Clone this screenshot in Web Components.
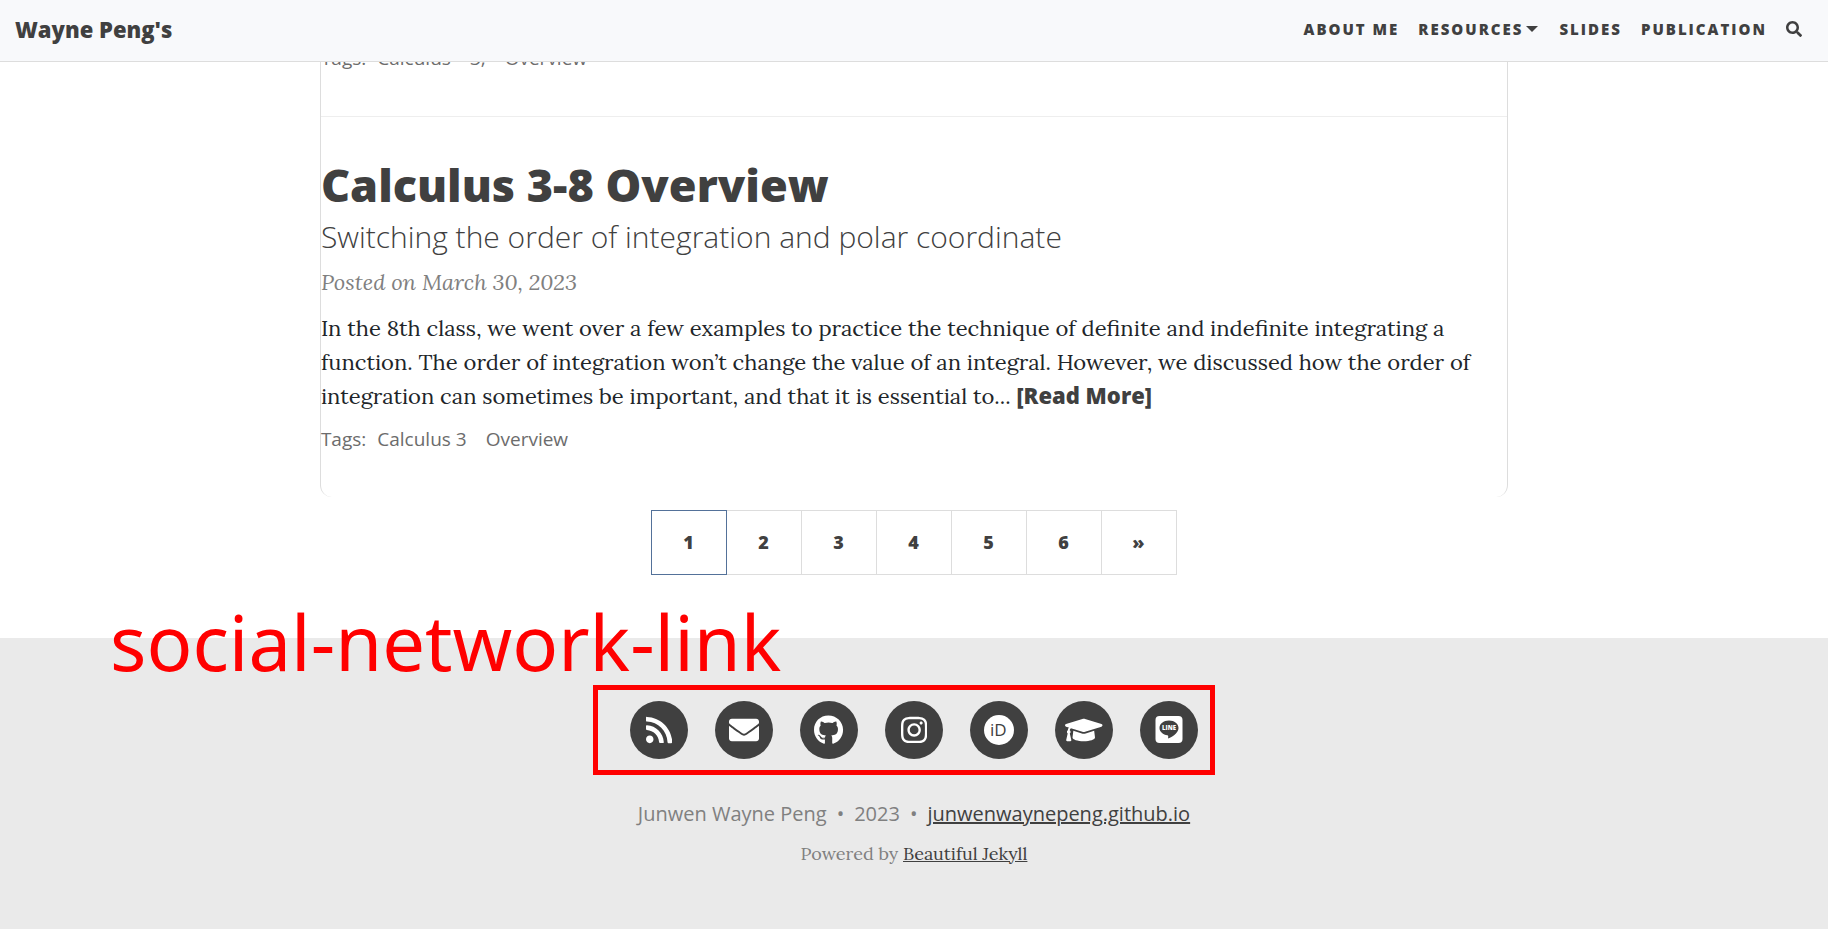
<!DOCTYPE html>
<html lang="en">
<head>
<meta charset="utf-8">
<title>Wayne Peng's</title>
<style>
html,body{margin:0}
body{--ink:#404040;--muted:#808080;--line:#ddd;--head:"Open Sans","Noto Sans",sans-serif;--text:"Lora","Liberation Serif",serif;
display:flex;flex-direction:column;min-height:100vh;background:#fff;color:#212529;font-family:var(--text)}
site-footer{flex:1}
</style>
</head>
<body>
<site-nav></site-nav>
<post-list>
  <post-tags prior><a href="#calculus">Calculus</a><a href="#3">3,</a><a href="#overview">Overview</a></post-tags>
  <post-preview>
    <span slot="title">Calculus 3-8 Overview</span>
    <span slot="subtitle">Switching the order of integration and polar coordinate</span>
    <span slot="date">Posted on March 30, 2023</span>
    <span slot="excerpt">In the 8th class, we went over a few examples to practice the technique of definite and indefinite integrating a function. The order of integration won’t change the value of an integral. However, we discussed how the order of integration can sometimes be important, and that it is essential to... <read-more>[Read More]</read-more></span>
    <post-tags slot="tags"><a href="#calculus-3">Calculus 3</a><a href="#overview">Overview</a></post-tags>
  </post-preview>
</post-list>
<page-pager></page-pager>
<site-footer></site-footer>
<script>
const define=(name,html)=>customElements.define(name,class extends HTMLElement{
  constructor(){super();this.attachShadow({mode:"open"}).innerHTML=html}
});

define("site-nav",`<style>
:host{display:block;position:fixed;top:0;left:0;right:0;z-index:2;background:#f8f9fb;border-bottom:1px solid var(--line);font-family:var(--head);color:var(--ink);font-weight:800}
nav{display:flex;align-items:center;justify-content:space-between;height:61px;padding:0 26px 4px 15px;box-sizing:border-box}
a{color:inherit;text-decoration:none}
.brand{font-size:22px;line-height:32px}
ul{display:flex;gap:19px;margin:0;padding:0;list-style:none;font-size:15px;line-height:24px;letter-spacing:2px;text-transform:uppercase}
li{display:flex;align-items:center}
button{font:inherit;color:inherit;letter-spacing:inherit;text-transform:inherit;background:none;border:0;padding:0;display:flex;align-items:center;gap:3px}
i{border:6px solid transparent;border-top-color:currentColor;border-bottom:0;margin-right:2px}
svg{width:16px;height:16px;fill:currentColor;display:block}
</style>
<nav><a class="brand" href="#home">Wayne Peng's</a>
<ul><li><a href="#about">About Me</a></li><li><button type="button">Resources<i></i></button></li><li><a href="#slides">Slides</a></li><li><a href="#publication">Publication</a></li>
<li><button type="button" aria-label="Search"><svg viewBox="0 0 512 512"><path d="M505 442.7L405.3 343c-4.5-4.5-10.6-7-17-7H372c27.6-35.3 44-79.7 44-128C416 93.1 322.9 0 208 0S0 93.1 0 208s93.1 208 208 208c48.3 0 92.7-16.4 128-44v16.3c0 6.4 2.5 12.5 7 17l99.7 99.7c9.4 9.4 24.6 9.4 33.9 0l28.3-28.3c9.4-9.4 9.4-24.6.1-34zM208 336c-70.7 0-128-57.2-128-128 0-70.7 57.2-128 128-128 70.7 0 128 57.2 128 128 0 70.7-57.2 128-128 128z"/></svg></button></li></ul></nav>`);

define("post-list",`<style>
:host{display:block;width:65%;box-sizing:border-box;margin:0 auto;padding-top:44px;border:solid var(--line);border-width:0 1px;border-radius:0 0 12px 12px}
</style><slot></slot>`);

define("post-tags",`<style>
:host{display:flex;font-family:var(--head);font-size:19px;line-height:28px;color:#6c6c6c}
:host([prior]){margin-bottom:44px}
::slotted(a){color:inherit;text-decoration:none;margin-left:11px;margin-right:8px}
</style><span>Tags:</span><slot></slot>`);

define("read-more",`<style>
:host{display:inline}
a{font-family:var(--head);font-weight:800;line-height:24px;color:var(--ink);text-decoration:none}
</style><a href="#post"><slot></slot></a>`);

define("post-preview",`<style>
:host{display:block;border-top:1px solid #eee;padding:43px 0 44px}
h2,h3,p{margin:0}
h2,h3{font-family:var(--head);color:var(--ink)}
h2{font-size:45px;line-height:50px;font-weight:800}
h3{font-size:30px;line-height:34px;font-weight:300;margin-top:10px}
a{color:inherit;text-decoration:none}
.date{font-style:italic;font-size:22px;line-height:34px;color:var(--muted);margin:11px 0 12px}
.excerpt{font-size:22px;line-height:34px;margin-bottom:12px}
</style>
<article><a href="#post"><h2><slot name="title"></slot></h2><h3><slot name="subtitle"></slot></h3></a>
<p class="date"><slot name="date"></slot></p>
<p class="excerpt"><slot name="excerpt"></slot></p>
<slot name="tags"></slot></article>`);

define("page-pager",`<style>
:host{display:block;margin:13px 0 63px}
ul{display:flex;justify-content:center;margin:0;padding:0;list-style:none;font:800 18px/26px var(--head)}
a{display:block;width:74px;padding:18px 0 19px;text-align:center;border:1px solid var(--line);margin-left:-1px;color:var(--ink);text-decoration:none;background:#fff}
[aria-current]{position:relative;border-color:#537199}
</style>
<ul><li><a href="#1" aria-current="page">1</a></li><li><a href="#2">2</a></li><li><a href="#3">3</a></li><li><a href="#4">4</a></li><li><a href="#5">5</a></li><li><a href="#6">6</a></li><li><a href="#next">»</a></li></ul>`);

define("social-link",`<style>
:host{display:block}
a{display:flex;align-items:center;justify-content:center;width:58px;height:58px;border-radius:50%;background:var(--ink);color:#fff}
::slotted(svg){height:30px;fill:currentColor;display:block}
</style><a href="#social"><slot></slot></a>`);

define("call-out",`<style>
:host{position:absolute;color:red;font:76px/100px "Noto Sans",sans-serif;white-space:nowrap}
:host([frame]){border:5px solid;inset:-16px -17px -16px -37px;pointer-events:none}
</style><slot></slot>`);

define("site-footer",`<style>
:host{display:block;position:relative;background:#eaeaea;color:var(--muted);text-align:center;padding:63px 0 50px;box-sizing:border-box}
.social{position:relative;display:flex;gap:27px;width:max-content;margin:0 auto}
p{margin:0}
a{color:var(--ink);text-decoration:underline}
.copy{font:20px/30px var(--head);margin-top:40px;display:flex;justify-content:center;gap:10px}
.power{font-size:18px;line-height:30px;margin-top:10px}
.label{left:110px;top:-46px}
</style>
<call-out class="label">social-network-link</call-out>
<div class="social">
<social-link><svg viewBox="0 0 448 512" role="img" aria-label="RSS"><path d="M128.081 415.959c0 35.369-28.672 64.041-64.041 64.041S0 451.328 0 415.959s28.672-64.041 64.041-64.041 64.04 28.673 64.04 64.041zm175.66 47.25c-8.354-154.6-132.185-278.587-286.95-286.95C7.656 175.765 0 183.105 0 192.253v48.069c0 8.415 6.49 15.472 14.887 16.018 111.832 7.284 201.473 96.702 208.772 208.772.547 8.397 7.604 14.887 16.018 14.887h48.069c9.149.001 16.489-7.655 15.995-16.79zm144.249.288C439.596 229.677 251.465 40.445 16.503 32.01 7.473 31.686 0 38.981 0 48.016v48.068c0 8.625 6.835 15.645 15.453 15.999 191.179 7.839 344.627 161.316 352.465 352.465.353 8.618 7.373 15.453 15.999 15.453h48.068c9.034-.001 16.329-7.474 16.005-16.504z"/></svg></social-link>
<social-link><svg viewBox="0 0 512 512" role="img" aria-label="Email"><path d="M502.3 190.8c3.9-3.1 9.7-.2 9.7 4.7V400c0 26.5-21.5 48-48 48H48c-26.5 0-48-21.5-48-48V195.6c0-5 5.7-7.8 9.7-4.7 22.4 17.4 52.1 39.5 154.1 113.6 21.1 15.4 56.7 47.8 92.2 47.6 35.7.3 72-32.8 92.3-47.6 102-74.1 131.6-96.3 154-113.7zM256 320c23.2.4 56.6-29.2 73.4-41.4 132.7-96.3 142.8-104.7 173.4-128.7 5.8-4.5 9.2-11.5 9.2-18.9v-19c0-26.5-21.5-48-48-48H48c-26.5 0-48 21.5-48 48v19c0 7.4 3.4 14.3 9.2 18.9 30.6 23.9 40.7 32.4 173.4 128.7 16.8 12.2 50.2 41.8 73.4 41.4z"/></svg></social-link>
<social-link><svg viewBox="0 0 496 512" role="img" aria-label="GitHub"><path d="M165.9 397.4c0 2-2.3 3.6-5.2 3.6-3.3.3-5.6-1.3-5.6-3.6 0-2 2.3-3.6 5.2-3.6 3-.3 5.6 1.3 5.6 3.6zm-31.1-4.5c-.7 2 1.3 4.3 4.3 4.9 2.6 1 5.6 0 6.2-2s-1.3-4.3-4.3-5.2c-2.6-.7-5.5.3-6.2 2.3zm44.2-1.7c-2.9.7-4.9 2.6-4.6 4.9.3 2 2.9 3.3 5.9 2.6 2.9-.7 4.9-2.6 4.6-4.6-.3-1.9-3-3.2-5.9-2.9zM244.8 8C106.1 8 0 113.3 0 252c0 110.9 69.8 205.8 169.5 239.2 12.8 2.3 17.3-5.6 17.3-12.1 0-6.2-.3-40.4-.3-61.4 0 0-70 15-84.7-29.8 0 0-11.4-29.1-27.8-36.6 0 0-22.9-15.7 1.6-15.4 0 0 24.9 2 38.6 25.8 21.9 38.6 58.6 27.5 72.9 20.9 2.3-16 8.8-27.1 16-33.7-55.9-6.2-112.3-14.3-112.3-110.5 0-27.5 7.6-41.3 23.6-58.9-2.6-6.5-11.1-33.3 2.6-67.9 20.9-6.5 69 27 69 27 20-5.6 41.5-8.5 62.8-8.5s42.8 2.9 62.8 8.5c0 0 48.1-33.6 69-27 13.7 34.7 5.2 61.4 2.6 67.9 16 17.7 25.8 31.5 25.8 58.9 0 96.5-58.9 104.2-114.8 110.5 9.2 7.9 17 22.9 17 46.4 0 33.7-.3 75.4-.3 83.6 0 6.5 4.6 14.4 17.3 12.1C428.2 457.8 496 362.9 496 252 496 113.3 383.5 8 244.8 8z"/></svg></social-link>
<social-link><svg viewBox="0 0 448 512" role="img" aria-label="Instagram"><path d="M224.1 141c-63.6 0-114.9 51.3-114.9 114.9s51.3 114.9 114.9 114.9S339 319.5 339 255.9 287.7 141 224.1 141zm0 189.6c-41.1 0-74.7-33.5-74.7-74.7s33.5-74.7 74.7-74.7 74.7 33.5 74.7 74.7-33.6 74.7-74.7 74.7zm146.4-194.3c0 14.9-12 26.8-26.8 26.8-14.9 0-26.8-12-26.8-26.8s12-26.8 26.8-26.8 26.8 12 26.8 26.8zm76.1 27.2c-1.7-35.9-9.9-67.7-36.2-93.9-26.2-26.2-58-34.4-93.9-36.2-37-2.1-147.9-2.1-184.9 0-35.8 1.7-67.6 9.9-93.9 36.1s-34.4 58-36.2 93.9c-2.1 37-2.1 147.9 0 184.9 1.7 35.9 9.9 67.7 36.2 93.9s58 34.4 93.9 36.2c37 2.1 147.9 2.1 184.9 0 35.9-1.7 67.7-9.9 93.9-36.2 26.2-26.2 34.4-58 36.2-93.9 2.1-37 2.1-147.8 0-184.8zM398.8 388c-7.8 19.6-22.9 34.7-42.6 42.6-29.5 11.7-99.5 9-132.1 9s-102.7 2.6-132.1-9c-19.6-7.8-34.7-22.9-42.6-42.6-11.7-29.5-9-99.5-9-132.1s-2.6-102.7 9-132.1c7.8-19.6 22.9-34.7 42.6-42.6 29.5-11.7 99.5-9 132.1-9s102.7-2.6 132.1 9c19.6 7.8 34.7 22.9 42.6 42.6 11.7 29.5 9 99.5 9 132.1s2.7 102.7-9 132.1z"/></svg></social-link>
<social-link><svg viewBox="0 0 30 30" role="img" aria-label="ORCID"><circle cx="15" cy="15" r="15"/><text x="6" y="21" fill="#404040" font-family="Open Sans" font-size="17">iD</text></svg></social-link>
<social-link><svg viewBox="0 0 640 512" role="img" aria-label="Scholar"><path d="M622.34 153.2L343.4 67.5c-15.2-4.67-31.6-4.67-46.79 0L17.66 153.2c-23.54 7.23-23.54 38.36 0 45.59l48.63 14.94c-10.67 13.19-17.23 29.28-17.88 46.9C38.78 266.15 32 276.11 32 288c0 10.78 5.68 19.85 13.86 25.65L20.33 428.53C18.11 438.52 25.71 448 35.94 448h56.11c10.24 0 17.84-9.48 15.62-19.47L82.14 313.65C90.32 307.85 96 298.78 96 288c0-11.57-6.47-21.25-15.66-26.87.76-15.02 8.44-28.3 20.69-36.72L296.6 284.5c9.06 2.78 26.44 6.25 46.79 0l278.95-85.7c23.55-7.24 23.55-38.36 0-45.6zM352.79 315.09c-28.53 8.76-52.84 3.92-65.59 0l-145.02-44.55L128 384c0 35.35 85.96 64 192 64s192-28.65 192-64l-14.18-113.47-145.03 44.56z"/></svg></social-link>
<social-link><svg viewBox="0.5 1 30 30" role="img" aria-label="Line"><rect x="2" y="2" width="27" height="27" rx="4"/><path d="M15.500 6.500C10 6.500 6 9.700 6 14C6 17.900 9.500 20.700 14 21.200C15.200 21.500 14.600 22.800 14.600 24.500C17.500 23.500 25 19.500 25 14C25 9.700 21 6.500 15.500 6.500Z" fill="#404040"/><text x="15.500" y="16" text-anchor="middle" font-family="Open Sans" font-weight="800" font-size="6">LINE</text></svg></social-link>
<call-out frame></call-out>
</div>
<p class="copy"><span>Junwen Wayne Peng</span><span>•</span><span>2023</span><span>•</span><a href="#home">junwenwaynepeng.github.io</a></p>
<p class="power">Powered by <a href="#jekyll">Beautiful Jekyll</a></p>`);
</script>
</body>
</html>
